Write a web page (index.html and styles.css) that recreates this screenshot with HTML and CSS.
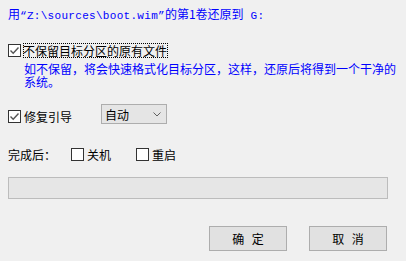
FILE: index.html
```html
<!DOCTYPE html>
<html lang="zh-CN">
<head>
<meta charset="utf-8">
<title>还原</title>
<link rel="stylesheet" href="styles.css">
</head>
<body>
<div class="dlg">
  <p class="msg">用<span class="mono">“Z:\sources\boot.wim”</span>的第1卷还原到<span class="mono"> G:</span></p>

  <div class="row row1">
    <span class="cb"><svg viewBox="0 0 11 11" width="11" height="11"><path d="M1.5 5.5 L4.2 8.2 L9.5 2.5" fill="none" stroke="#555" stroke-width="1.4"/></svg></span>
    <span class="lbl focus">不保留目标分区的原有文件</span>
  </div>
  <p class="desc">如不保留，将会快速格式化目标分区，这样，还原后将得到一个干净的系统。</p>

  <div class="row row2">
    <div class="chk">
      <span class="cb"><svg viewBox="0 0 11 11" width="11" height="11"><path d="M1.5 5.5 L4.2 8.2 L9.5 2.5" fill="none" stroke="#555" stroke-width="1.4"/></svg></span>
      <span class="lbl">修复引导</span>
    </div>
    <div class="select">
      <span>自动</span>
      <svg class="chev" viewBox="0 0 8 5" width="8" height="5"><path d="M0.5 0.5 L4 4 L7.5 0.5" fill="none" stroke="#606060" stroke-width="1"/></svg>
    </div>
  </div>

  <div class="row row3">
    <span class="lbl done">完成后：</span>
    <div class="chk"><span class="cb"></span><span class="lbl">关机</span></div>
    <div class="chk second"><span class="cb"></span><span class="lbl">重启</span></div>
  </div>

  <div class="progress"></div>

  <div class="buttons">
    <div class="btn">确 定</div>
    <div class="btn">取 消</div>
  </div>
</div>
</body>
</html>
```

FILE: styles.css
```css
html, body {
  margin: 0;
  padding: 0;
}
body {
  width: 406px;
  height: 261px;
  overflow: hidden;
  background: #f0f0f0;
  font-family: "Noto Sans CJK SC", sans-serif;
  font-size: 12px;
  color: #000;
}
.dlg {
  padding: 7px 8px 0 8px;
  display: flex;
  flex-direction: column;
}
.msg {
  margin: 0;
  color: #0000ff;
  line-height: 14px;
  white-space: nowrap;
}
.mono {
  font-family: "Liberation Mono", monospace;
  font-size: 11px;
  letter-spacing: 0.3px;
}
.row {
  display: flex;
}
.row1 {
  margin-top: 20px;
  height: 15px;
  align-items: center;
  gap: 2px;
}
.cb {
  width: 13px;
  height: 13px;
  box-sizing: border-box;
  border: 1px solid #333;
  background: #fff;
  display: flex;
  align-items: center;
  justify-content: center;
  flex: none;
}
.lbl {
  line-height: 15px;
  white-space: nowrap;
}
.focus {
  outline: 1px dotted #000;
  outline-offset: -1px;
  padding: 0 1px 0 0;
}
.desc {
  margin: 4px 0 0 16px;
  width: 378px;
  color: #0000ff;
  line-height: 13px;
}
.row2 {
  margin-top: 16px;
  align-items: flex-end;
}
.chk {
  display: flex;
  align-items: center;
  gap: 3px;
  height: 15px;
}
.select {
  margin-left: 29px;
  width: 66px;
  height: 20px;
  box-sizing: border-box;
  border: 1px solid #adadad;
  background: #e5e5e5;
  display: flex;
  align-items: center;
  justify-content: space-between;
  padding: 0 5px 0 3px;
}
.chev {
  display: block;
}
.row3 {
  margin-top: 23px;
  align-items: center;
  height: 15px;
}
.done {
  width: 63px;
}
.second {
  margin-left: 25px;
}
.progress {
  margin-top: 15px;
  width: 380px;
  height: 22px;
  box-sizing: border-box;
  border: 1px solid #bcbcbc;
  background: #e6e6e6;
}
.buttons {
  margin-top: 27px;
  display: flex;
  justify-content: flex-end;
  gap: 22px;
  padding-right: 11px;
}
.btn {
  width: 78px;
  height: 25px;
  box-sizing: border-box;
  border: 1px solid #adadad;
  background: #e1e1e1;
  display: flex;
  align-items: center;
  justify-content: center;
  font-size: 12px;
  white-space: pre;
  word-spacing: 5px;
}
```
